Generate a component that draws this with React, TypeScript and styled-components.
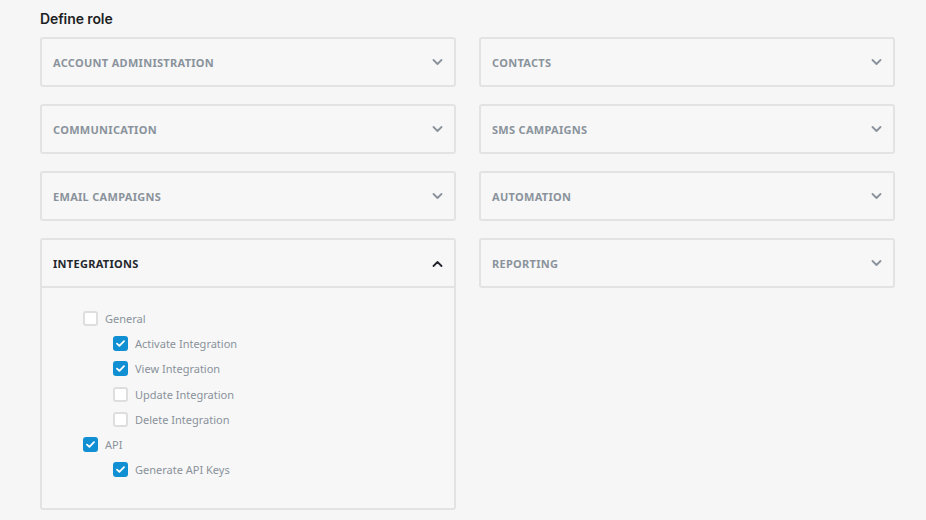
import React, { useState } from 'react'
import styled, { createGlobalStyle } from 'styled-components'

const GlobalStyle = createGlobalStyle`
  html, body {
    margin: 0;
    padding: 0;
    background: #f6f6f6;
  }
  body {
    font-family: 'Noto Sans', 'Open Sans', sans-serif;
  }
`

const Page = styled.div`
  padding: 10px 31px 0 40px;
  width: 926px;
  height: 520px;
  box-sizing: border-box;
  overflow: hidden;
`

const Heading = styled.h2`
  margin: 0 0 10px 0;
  font-family: 'Inter', 'Open Sans', sans-serif;
  font-size: 14px;
  font-weight: 600;
  color: #1d1f24;
  line-height: 17px;
  letter-spacing: -0.1px;
`

const Columns = styled.div`
  display: grid;
  grid-template-columns: 416px 416px;
  column-gap: 23px;
  align-items: start;
`

const Column = styled.div`
  display: flex;
  flex-direction: column;
  gap: 17px;
`

const Panel = styled.div`
  border: 2px solid #e3e3e3;
  border-radius: 3px;
  background: #f7f7f7;
`

const PanelHeader = styled.div<{ $open?: boolean }>`
  height: 46px;
  display: flex;
  align-items: center;
  justify-content: space-between;
  padding: 0 11px 0 11px;
  cursor: pointer;
  border-bottom: ${p => (p.$open ? '2px solid #e3e3e3' : 'none')};
`

const PanelTitle = styled.span<{ $open?: boolean }>`
  font-size: 11px;
  font-weight: 700;
  letter-spacing: 0.3px;
  text-transform: uppercase;
  color: ${p => (p.$open ? '#23272d' : '#8a939c')};
`

const PanelBody = styled.div`
  padding: 23px 40px 31px 41px;
  display: flex;
  flex-direction: column;
  gap: 10.2px;
`

const Row = styled.label<{ $level: number }>`
  display: flex;
  align-items: center;
  gap: 7px;
  padding-left: ${p => p.$level * 30}px;
  height: 15px;
  font-size: 11px;
  color: #8a929b;
  cursor: pointer;
`

const Box = styled.span<{ $checked: boolean }>`
  width: 15px;
  height: 15px;
  box-sizing: border-box;
  border-radius: 3px;
  border: ${p => (p.$checked ? 'none' : '2px solid #dedede')};
  background: ${p => (p.$checked ? '#118fd3' : '#ffffff')};
  display: flex;
  align-items: center;
  justify-content: center;
  flex-shrink: 0;
`

const Chevron = ({ up, color }: { up?: boolean; color: string }) => (
  <svg width="11" height="7" viewBox="0 0 11 7" fill="none">
    <path
      d={up ? 'M1.5 6 L5.5 2 L9.5 6' : 'M1.5 1 L5.5 5 L9.5 1'}
      stroke={color}
      strokeWidth="1.8"
      strokeLinecap="round"
      strokeLinejoin="round"
    />
  </svg>
)

const Check = () => (
  <svg width="9" height="7" viewBox="0 0 9 7" fill="none">
    <path d="M1 3.6 L3.4 5.8 L8 1.2" stroke="#fff" strokeWidth="1.8" strokeLinecap="round" strokeLinejoin="round" />
  </svg>
)

type Perm = { label: string; level: number; checked: boolean }

const initialPerms: Perm[] = [
  { label: 'General', level: 0, checked: false },
  { label: 'Activate Integration', level: 1, checked: true },
  { label: 'View Integration', level: 1, checked: true },
  { label: 'Update Integration', level: 1, checked: false },
  { label: 'Delete Integration', level: 1, checked: false },
  { label: 'API', level: 0, checked: true },
  { label: 'Generate API Keys', level: 1, checked: true },
]

const Section = ({ title, open, children }: { title: string; open?: boolean; children?: React.ReactNode }) => (
  <Panel>
    <PanelHeader $open={open}>
      <PanelTitle $open={open}>{title}</PanelTitle>
      <Chevron up={open} color={open ? '#23272d' : '#8a939c'} />
    </PanelHeader>
    {open && children}
  </Panel>
)

const App = () => {
  const [perms, setPerms] = useState(initialPerms)

  const toggle = (i: number) =>
    setPerms(perms.map((p, j) => (j === i ? { ...p, checked: !p.checked } : p)))

  return (
    <Page>
      <GlobalStyle />
      <Heading>Define role</Heading>
      <Columns>
        <Column>
          <Section title="Account Administration" />
          <Section title="Communication" />
          <Section title="Email Campaigns" />
          <Section title="Integrations" open>
            <PanelBody>
              {perms.map((p, i) => (
                <Row key={p.label} $level={p.level} onClick={() => toggle(i)}>
                  <Box $checked={p.checked}>{p.checked && <Check />}</Box>
                  {p.label}
                </Row>
              ))}
            </PanelBody>
          </Section>
        </Column>
        <Column>
          <Section title="Contacts" />
          <Section title="SMS Campaigns" />
          <Section title="Automation" />
          <Section title="Reporting" />
        </Column>
      </Columns>
    </Page>
  )
}

export default App
